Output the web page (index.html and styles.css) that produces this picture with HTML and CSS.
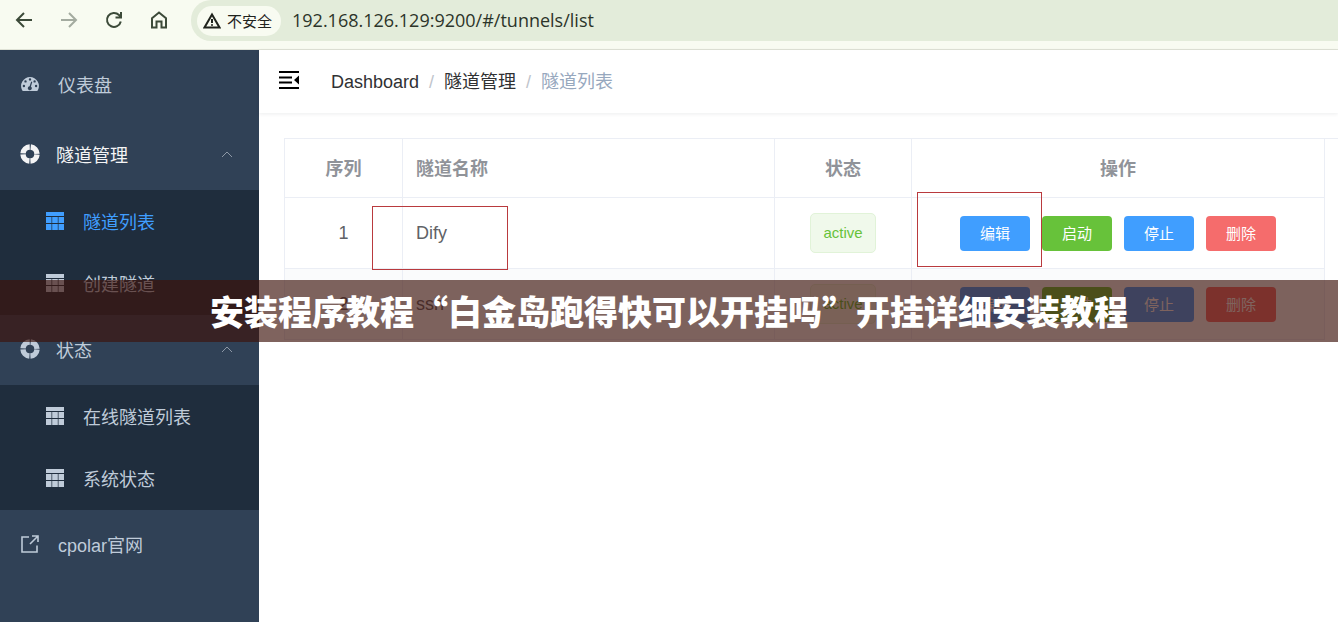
FILE: index.html
```html
<!DOCTYPE html>
<html lang="zh-CN">
<head>
<meta charset="UTF-8" />
<meta name="viewport" content="width=device-width, initial-scale=1" />
<title>隧道列表</title>
<link rel="stylesheet" href="styles.css">
</head>
<body>

<svg class="sprite" aria-hidden="true">
  <symbol id="i-gauge" viewBox="0 0 18 18">
    <path fill="currentColor" fill-rule="evenodd" d="M9 2a9 9 0 0 1 7.9 13.2c-.2.5-.6.8-1.1.8H2.200c-.5 0-.9-.3-1.100-.8A9 9 0 0 1 9 2zM9 3.200a1.200 1.200 0 1 0 0 2.400 1.200 1.200 0 0 0 0-2.400zM4.500 5.200a1.200 1.200 0 1 0 0 2.400 1.200 1.200 0 0 0 0-2.400zM13.600 5.200a1.200 1.200 0 1 0 0 2.400 1.200 1.200 0 0 0 0-2.400zM2.900 9.800a1.200 1.200 0 1 0 0 2.400 1.200 1.200 0 0 0 0-2.400zM15.100 9.800a1.200 1.200 0 1 0 0 2.400 1.200 1.200 0 0 0 0-2.400zM10.200 6.500l-1.600 4.700a2 2 0 1 0 1.300.3l1.400-4.600z"/>
  </symbol>
  <symbol id="i-ring" viewBox="0 0 20 20">
    <circle cx="10" cy="10" r="7" fill="none" stroke="currentColor" stroke-width="5.400" stroke-dasharray="10 1" stroke-dashoffset="-.5"/>
  </symbol>
  <symbol id="i-grid" viewBox="0 0 18 18">
    <path fill="currentColor" d="M0 0h18v4H0zM0 5h5.500v6H0zM6.200 5h5.600v6H6.200zM12.500 5H18v6h-5.500zM0 12h5.500v6H0zM6.200 12h5.600v6H6.200zM12.500 12H18v6h-5.500z"/>
  </symbol>
  <symbol id="i-arrow" viewBox="0 0 12 7">
    <path fill="none" stroke="currentColor" d="M1 6l5-5 5 5"/>
  </symbol>
</svg>

<div class="browser-bar">
  <button class="nav-btn" aria-label="后退">
    <svg width="20" height="20" viewBox="0 0 20 20"><path d="M18 10H3.500M10 3l-7 7 7 7"/></svg>
  </button>
  <button class="nav-btn disabled" aria-label="前进" disabled>
    <svg width="20" height="20" viewBox="0 0 20 20"><path d="M2 10h14.500M10 3l7 7-7 7"/></svg>
  </button>
  <button class="nav-btn" aria-label="刷新">
    <svg width="20" height="20" viewBox="0 0 20 20"><path d="M16.800 11.500A7 7 0 1 1 15 5l1.500 1.500M17 2v5.500h-5.500"/></svg>
  </button>
  <button class="nav-btn" aria-label="主页">
    <svg width="20" height="20" viewBox="0 0 20 20"><path d="M3 8.200L10 2.500l7 5.700v9.300h-4.500v-6h-5v6H3z"/></svg>
  </button>
  <div class="address">
    <button class="insecure">
      <svg width="18" height="18" viewBox="0 0 18 18"><path d="M9 2.500L16.500 15.500H1.500zM9 7v4M9 12.300v1.500"/></svg>
      不安全
    </button>
    <input class="url" type="text" aria-label="地址" value="192.168.126.129:9200/#/tunnels/list">
  </div>
</div>

<div class="layout">
  <nav class="sidebar">
    <a class="menu-item single" href="#/dashboard"><svg width="18" height="18"><use href="#i-gauge"/></svg>仪表盘</a>

    <button class="menu-item active"><svg width="20" height="20"><use href="#i-ring"/></svg>隧道管理<svg class="caret" width="12" height="7"><use href="#i-arrow"/></svg></button>
    <div class="submenu">
      <a class="current" href="#/tunnels/list"><svg width="18" height="18"><use href="#i-grid"/></svg>隧道列表</a>
      <a href="#/tunnels/create"><svg width="18" height="18"><use href="#i-grid"/></svg>创建隧道</a>
    </div>

    <button class="menu-item"><svg width="20" height="20"><use href="#i-ring"/></svg>状态<svg class="caret" width="12" height="7"><use href="#i-arrow"/></svg></button>
    <div class="submenu">
      <a href="#/status/online"><svg width="18" height="18"><use href="#i-grid"/></svg>在线隧道列表</a>
      <a href="#/status/system"><svg width="18" height="18"><use href="#i-grid"/></svg>系统状态</a>
    </div>

    <a class="menu-item single" href="#/website">
      <svg width="18" height="18" viewBox="0 0 18 18"><path fill="none" stroke="currentColor" stroke-width="1.600" d="M8 2H1v15h15v-6.500M11 1h6v6M17 1L9 9"/></svg>cpolar官网
    </a>
  </nav>

  <main>
    <header class="navbar">
      <button class="hamburger" aria-label="收起菜单">
        <svg width="21" height="18" viewBox="0 0 21 18"><path stroke="currentColor" stroke-width="2" d="M0 1h20M0 6.500h13M0 11.500h13M0 17h20"/><path fill="currentColor" d="M20 4.500v9L15 9z"/></svg>
      </button>
      <div class="breadcrumb">
        <a href="#/dashboard">Dashboard</a><span class="sep">/</span><a href="#/tunnels">隧道管理</a><span class="sep">/</span><span class="here">隧道列表</span>
      </div>
    </header>

    <section class="content">
      <div class="table-wrap">
        <table>
          <thead>
            <tr>
              <th class="col-index">序列</th>
              <th class="col-name">隧道名称</th>
              <th class="col-status">状态</th>
              <th class="col-action">操作</th>
            </tr>
          </thead>
          <tbody>
            <tr>
              <td>1</td>
              <td class="col-name">Dify</td>
              <td><span class="tag">active</span></td>
              <td>
                <div class="actions">
                  <button class="btn primary">编辑</button>
                  <button class="btn success">启动</button>
                  <button class="btn primary">停止</button>
                  <button class="btn danger">删除</button>
                </div>
              </td>
            </tr>
            <tr>
              <td>2</td>
              <td class="col-name">ssh</td>
              <td><span class="tag">active</span></td>
              <td>
                <div class="actions">
                  <button class="btn primary">编辑</button>
                  <button class="btn success">启动</button>
                  <button class="btn primary">停止</button>
                  <button class="btn danger">删除</button>
                </div>
              </td>
            </tr>
          </tbody>
        </table>
        <!-- red marker boxes over the table -->
        <div class="mark mark-name"></div>
        <div class="mark mark-edit"></div>
      </div>
    </section>
  </main>
</div>

<div class="banner">安装程序教程“白金岛跑得快可以开挂吗”开挂详细安装教程</div>

</body>
</html>
```

FILE: styles.css
```css
*, *::before, *::after {
  box-sizing: border-box;
}
body {
  margin: 0;
  min-height: 100vh;
  display: flex;
  flex-direction: column;
  position: relative;
  overflow-x: hidden;
  font-family: "Liberation Sans", "Noto Sans CJK SC", sans-serif;
  font-size: 18px;
  color: #303133;
  background: #fff;
}
button {
  font-family: inherit;
  border: none;
  background: none;
  padding: 0;
  cursor: pointer;
}
a {
  color: inherit;
  text-decoration: none;
}
svg {
  flex-shrink: 0;
}
.sprite {
  position: absolute;
  width: 0;
  height: 0;
}

/* Browser toolbar */
.browser-bar {
  display: flex;
  align-items: flex-start;
  gap: 25px;
  height: 50px;
  padding-left: 14px;
  background: #f8fbf1;
  border-bottom: 1px solid #dfe2d6;
}
.nav-btn {
  display: flex;
  align-items: center;
  height: 40px;
}
.nav-btn svg {
  fill: none;
  stroke: #3c4a39;
  stroke-width: 2;
}
.nav-btn.disabled svg {
  stroke: #a4aba0;
}
.address {
  flex: 1;
  display: flex;
  align-items: center;
  gap: 11px;
  height: 41px;
  margin-left: -3px;
  padding-left: 6px;
  background: #e3ecda;
  border-radius: 20px 0 0 20px;
}
.insecure {
  display: flex;
  align-items: center;
  gap: 6px;
  height: 30px;
  padding: 0 9px 0 6px;
  border-radius: 15px;
  background: #f8fbf1;
  font-size: 15px;
  color: #1f231d;
}
.insecure svg {
  fill: none;
  stroke: #1f231d;
  stroke-width: 2;
}
.url {
  flex: 1;
  min-width: 0;
  height: 30px;
  padding: 0 0 2px;
  border: none;
  outline: none;
  background: none;
  font-family: "Open Sans", "Noto Sans", sans-serif;
  font-size: 18px;
  color: #2c3429;
}

/* Sidebar */
.layout {
  flex: 1;
  display: flex;
}
.sidebar {
  width: 259px;
  flex-shrink: 0;
  background: #304156;
  color: #bfcbd9;
}
.menu-item {
  display: flex;
  align-items: center;
  gap: 16px;
  width: 100%;
  height: 70px;
  padding: 0 26px 2px 20px;
  font-size: 18px;
  color: #bfcbd9;
}
.menu-item.single {
  gap: 19px;
  padding-left: 21px;
}
.menu-item.active {
  color: #f4f4f5;
}
.caret {
  margin-left: auto;
  color: #8d98a6;
}
.submenu {
  padding-bottom: 1px;
  background: #1f2d3d;
}
.submenu a {
  display: flex;
  align-items: center;
  gap: 19px;
  height: 62px;
  padding-left: 46px;
}
.submenu .current {
  color: #409eff;
}

/* Top navbar */
main {
  flex: 1;
  min-width: 0;
}
.navbar {
  display: flex;
  align-items: center;
  gap: 31px;
  height: 63px;
  padding: 0 0 3px 20px;
  box-shadow: 0 1px 4px rgba(0, 21, 41, 0.08);
}
.hamburger {
  display: flex;
  color: #000;
}
.breadcrumb {
  display: flex;
  align-items: baseline;
}
.sep {
  margin: 0 10px;
  color: #c0c4cc;
}
.here {
  color: #97a8be;
}

/* Tunnel table */
.content {
  padding: 25px 0 25px 25px;
}
.table-wrap {
  position: relative;
  border-top: 1px solid #ebeef5;
  border-left: 1px solid #ebeef5;
}
table {
  width: calc(100% - 13px);
  table-layout: fixed;
  border-collapse: separate;
  border-spacing: 0;
  color: #606266;
}
th, td {
  height: 71px;
  padding: 0;
  text-align: center;
  border-right: 1px solid #ebeef5;
  border-bottom: 1px solid #ebeef5;
}
th {
  height: 59px;
  padding-bottom: 2px;
  color: #909399;
}
th.col-index {
  width: 118px;
}
th.col-status {
  width: 137px;
}
th.col-action {
  width: 413px;
}
.col-name {
  padding-left: 13px;
  text-align: left;
}
tbody tr:nth-child(even) {
  background: #fafbfc;
}
.tag {
  display: inline-block;
  height: 40px;
  padding: 0 12px;
  line-height: 38px;
  font-size: 15px;
  color: #67c23a;
  background: #f0f9eb;
  border: 1px solid #e1f3d8;
  border-radius: 5px;
  vertical-align: middle;
}
.actions {
  display: flex;
  justify-content: center;
  gap: 12px;
}
.btn {
  width: 70px;
  height: 35px;
  padding-bottom: 2px;
  border-radius: 4px;
  font-size: 15px;
  color: #fff;
}
.primary {
  background: #409eff;
}
.success {
  background: #67c23a;
}
.danger {
  background: #f56c6c;
}

.mark {
  position: absolute;
  border: 1px solid #b93a3e;
  pointer-events: none;
}
.mark-name {
  left: 87px;
  top: 67px;
  width: 136px;
  height: 64px;
}
.mark-edit {
  right: 296px;
  top: 53px;
  width: 125px;
  height: 75px;
}

/* Caption strip across the page */
.banner {
  position: absolute;
  left: 0;
  right: 0;
  top: 280px;
  height: 62px;
  line-height: 62px;
  text-align: center;
  white-space: nowrap;
  font-family: "Noto Sans CJK SC", sans-serif;
  font-size: 34px;
  font-weight: 900;
  color: #fff;
  background: rgba(60, 18, 11, 0.66);
}
```
